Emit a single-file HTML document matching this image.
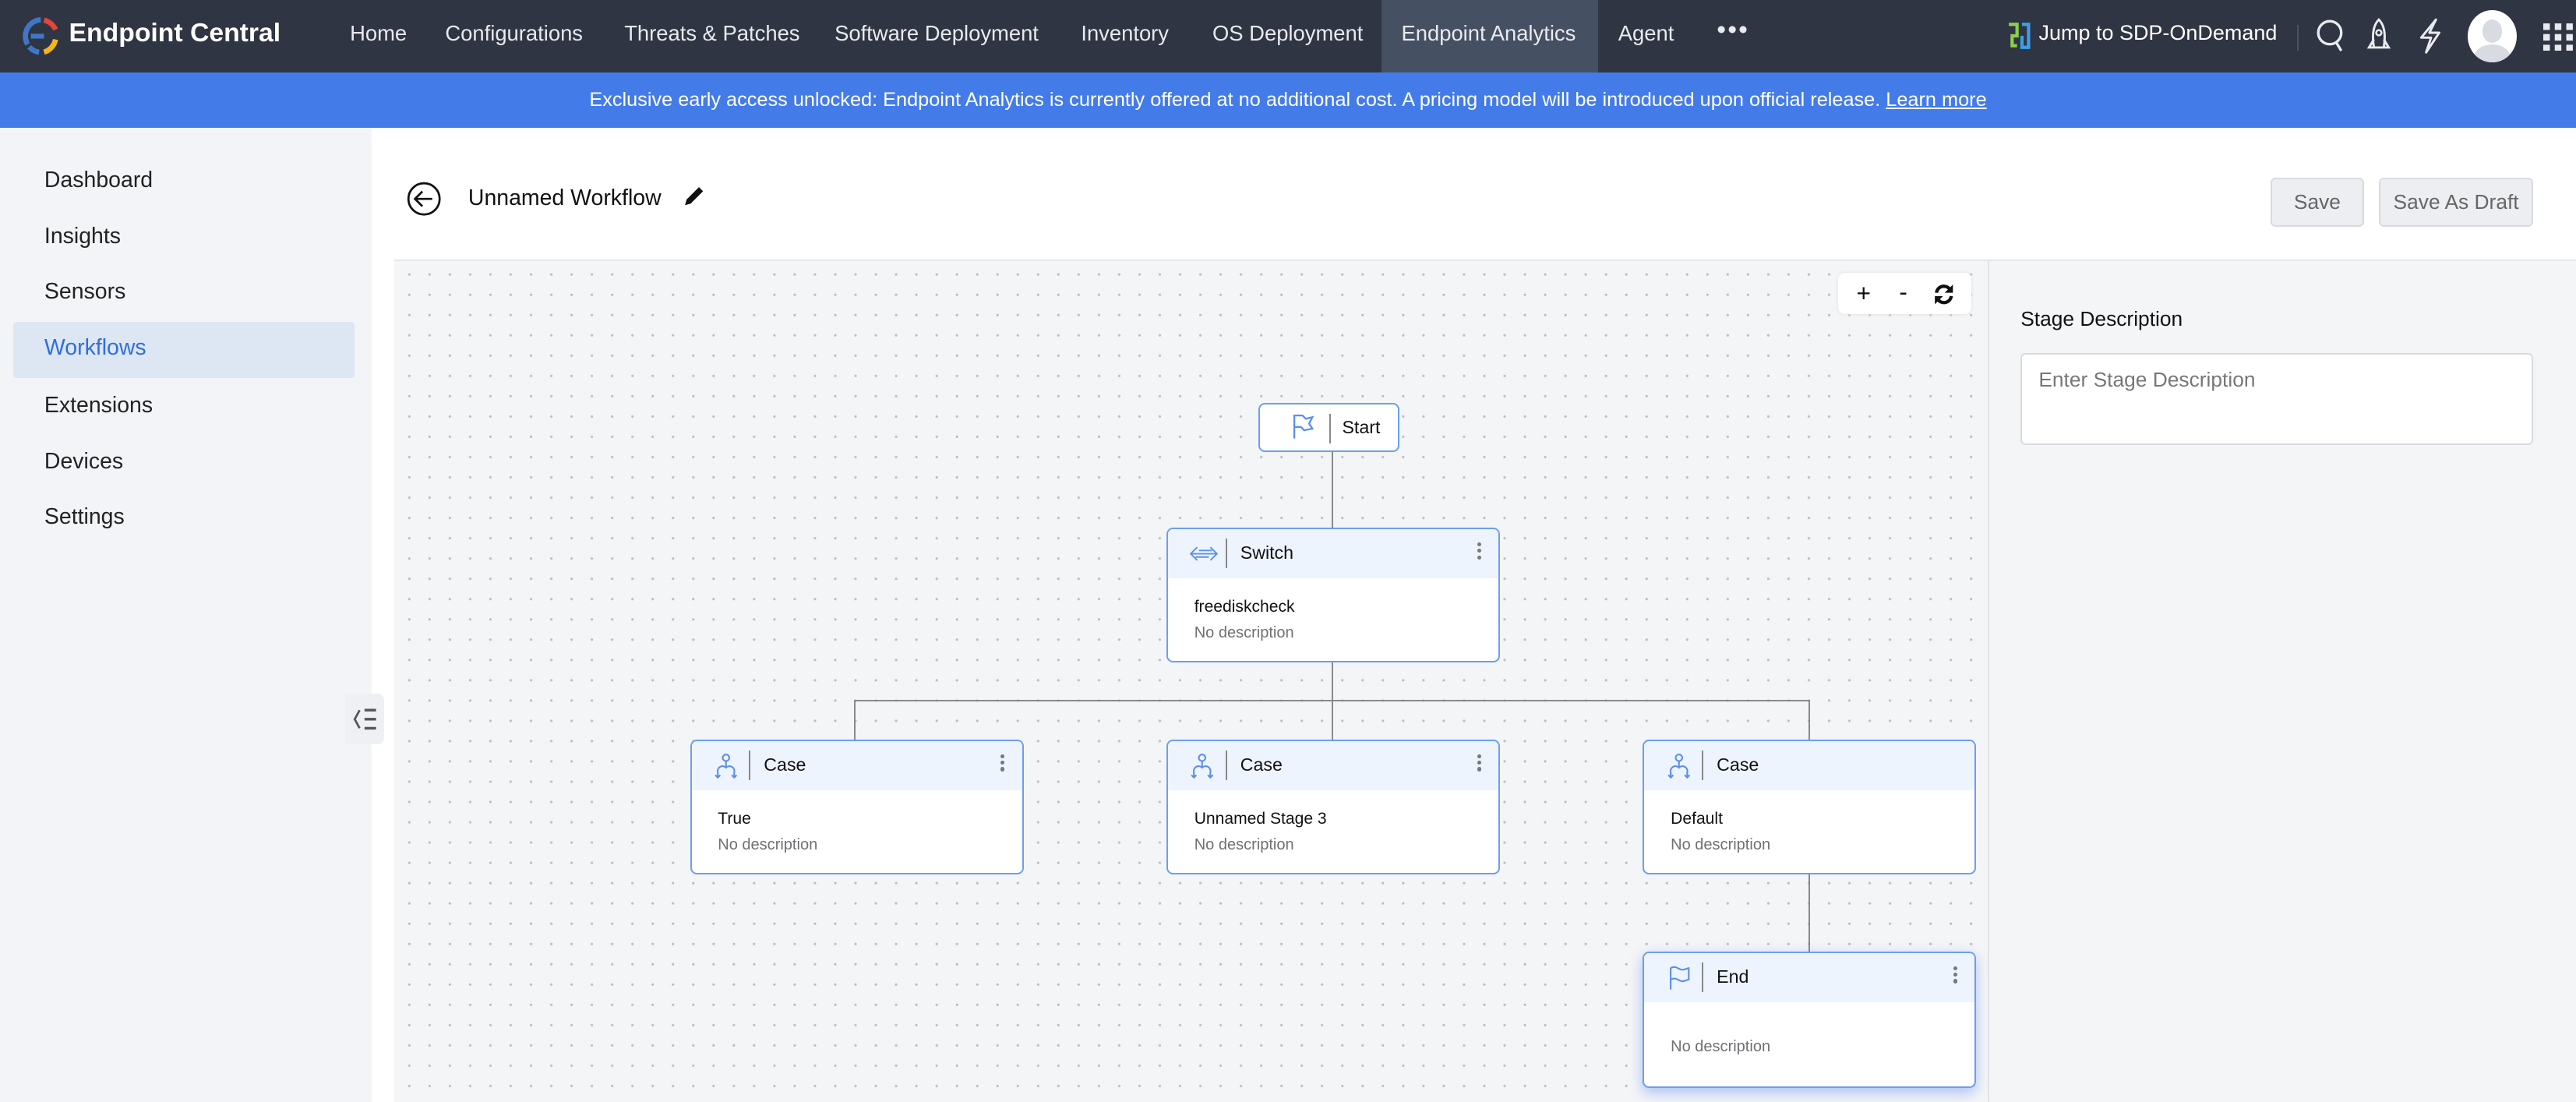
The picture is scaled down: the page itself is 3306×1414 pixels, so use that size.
<!DOCTYPE html>
<html><head><meta charset="utf-8">
<style>
*{box-sizing:border-box;margin:0;padding:0}
html,body{width:3306px;height:1414px;overflow:hidden}
body{background:#fff;font-family:"Liberation Sans",sans-serif;}
#r{zoom:2.10842;width:1568px;height:671px;position:relative;overflow:hidden;background:#fff}
.a{position:absolute}
.nav{left:0;top:0;width:1568px;height:44px;background:#2f3542}
.nav .t{position:absolute;top:13px;color:#e8eaee;font-size:13px;white-space:nowrap}
.banner{left:0;top:44px;width:1568px;height:34px;background:#437be9;color:#fff;font-size:12px;text-align:center;line-height:34px}
.side{left:0;top:78px;width:226px;height:593px;background:#f3f4f7}
.side div{position:absolute;left:27px;font-size:13.5px;color:#222}
.canvas{left:240px;top:158px;width:970px;height:513px;background-color:#f4f5f7;background-image:radial-gradient(circle,#b9bcc3 0.6px,transparent 0.9px);background-size:12.35px 12.35px;background-position:3px 2px;border-top:1px solid #e6e7ea}
.rp{left:1210px;top:158px;width:358px;height:513px;background:#f4f5f7;border-left:1px solid #e3e4e7;border-top:1px solid #e6e7ea}
.node{position:absolute;background:#fff;border:1px solid #6c9ef0;border-radius:4px;overflow:hidden}
.node .h{height:30px;background:#eef4fd;position:relative}
.node .h .lbl{position:absolute;left:44px;top:8px;font-size:11px;color:#111}
.node .h .sep{position:absolute;left:35px;top:6px;width:1px;height:18px;background:#888}
.node .h .dots{position:absolute;right:10px;top:8px;width:3px}
.dots i{display:block;width:2.5px;height:2.5px;border-radius:50%;background:#777;margin-bottom:1.5px}
.node .b1{position:absolute;left:16px;top:42px;font-size:10px;color:#111}
.node .b2{position:absolute;left:16px;top:58px;font-size:9.5px;color:#6f7075}
.ln{position:absolute;background:#8a8a8a}
.btn{position:absolute;top:108px;height:30px;background:#eceef1;border:1px solid #d8dadf;border-radius:3px;color:#666;font-size:12.5px;text-align:center;line-height:28px}
</style></head><body><div id="r">
<div class="a nav">
  <svg class="a" style="left:13px;top:9px" width="24" height="26" viewBox="0 0 24 26">
    <path d="M12 3 A10 10 0 0 0 4 18" stroke="#3f77c6" stroke-width="3.2" fill="none"/>
    <path d="M14 3.3 A10 10 0 0 1 21 9" stroke="#e2463a" stroke-width="3.2" fill="none"/>
    <path d="M21 15 A10 10 0 0 1 14 22.7" stroke="#f4b41a" stroke-width="3.2" fill="none"/>
    <path d="M5 19.5 A10 10 0 0 0 11 22.8" stroke="#3f77c6" stroke-width="3.2" fill="none"/>
    <rect x="6" y="11.5" width="8" height="3" fill="#3f77c6"/>
  </svg>
  <div class="t" style="left:42px;top:11px;font-size:16px;font-weight:bold;color:#fff">Endpoint Central</div>
  <div class="t" style="left:213px">Home</div>
  <div class="t" style="left:271px">Configurations</div>
  <div class="t" style="left:380px">Threats &amp; Patches</div>
  <div class="t" style="left:508px">Software Deployment</div>
  <div class="t" style="left:658px">Inventory</div>
  <div class="t" style="left:738px">OS Deployment</div>
  <div class="a" style="left:841px;top:0;width:132px;height:44px;background:#465063"></div>
  <div class="t" style="left:853px">Endpoint Analytics</div>
  <div class="t" style="left:985px">Agent</div>
  <div class="t" style="left:1045px;top:9px;font-size:16px;letter-spacing:1px">•••</div>
  <svg class="a" style="left:1222px;top:13px" width="15" height="18" viewBox="0 0 15 18"><path d="M1 2h5v7H3v6h3" stroke="#8ad14a" stroke-width="2" fill="none"/><path d="M9 2h4v14H9V9" stroke="#3aa0e8" stroke-width="2" fill="none"/></svg>
  <div class="t" style="left:1241px;color:#fff;font-size:12.8px">Jump to SDP-OnDemand</div>
  <div class="a" style="left:1398px;top:15px;width:1px;height:16px;background:#4a5263"></div>
  <svg class="a" style="left:1409px;top:11px" width="20" height="22" viewBox="0 0 20 22"><circle cx="9" cy="9" r="7" stroke="#e8eaee" stroke-width="1.6" fill="none"/><path d="M13 15l3 5" stroke="#e8eaee" stroke-width="1.6"/></svg>
  <svg class="a" style="left:1439px;top:11px" width="18" height="22" viewBox="0 0 18 22"><path d="M9 1C5 5 5 12 6 18h6c1-6 1-13-3-17z M6 13l-3 5h3 M12 13l3 5h-3" stroke="#e8eaee" stroke-width="1.4" fill="none"/><circle cx="9" cy="9" r="1.6" stroke="#e8eaee" stroke-width="1.2" fill="none"/></svg>
  <svg class="a" style="left:1471px;top:11px" width="16" height="22" viewBox="0 0 16 22"><path d="M12 1L3 12h6l-3 9 8-12H8z" stroke="#e8eaee" stroke-width="1.4" fill="none" stroke-linejoin="round"/></svg>
  <div class="a" style="left:1502px;top:6px;width:30px;height:32px;border-radius:50%;background:#fff;overflow:hidden"><div class="a" style="left:9px;top:6px;width:12px;height:14px;border-radius:50%;background:#d8dbe2"></div><div class="a" style="left:4px;top:21px;width:22px;height:16px;border-radius:50% 50% 0 0;background:#d8dbe2"></div></div>
  <svg class="a" style="left:1548px;top:14px" width="20" height="17" viewBox="0 0 20 17" fill="#e8eaee"><rect x="0" y="0" width="4" height="4"/><rect x="7" y="0" width="4" height="4"/><rect x="14" y="0" width="4" height="4"/><rect x="0" y="6.5" width="4" height="4"/><rect x="7" y="6.5" width="4" height="4"/><rect x="14" y="6.5" width="4" height="4"/><rect x="0" y="13" width="4" height="4"/><rect x="7" y="13" width="4" height="4"/><rect x="14" y="13" width="4" height="4"/></svg>
</div>
<div class="a banner">Exclusive early access unlocked: Endpoint Analytics is currently offered at no additional cost. A pricing model will be introduced upon official release. <u>Learn more</u></div>
<div class="a side">
  <div style="top:24px">Dashboard</div>
  <div style="top:58px">Insights</div>
  <div style="top:92px">Sensors</div>
  <div class="a" style="left:8px;top:118px;width:208px;height:34px;background:#dde6f3;border-radius:2px"></div>
  <div style="top:126px;color:#2e6ee0">Workflows</div>
  <div style="top:161px">Extensions</div>
  <div style="top:195px">Devices</div>
  <div style="top:229px">Settings</div>
</div>
<svg class="a" style="left:247px;top:110px" width="22" height="22" viewBox="0 0 22 22"><circle cx="11" cy="11" r="9.5" stroke="#111" stroke-width="1.3" fill="none"/><path d="M16 11H6M10 6.5L5.5 11l4.5 4.5" stroke="#111" stroke-width="1.3" fill="none"/></svg>
<div class="a" style="left:285px;top:113px;font-size:13.5px;color:#111">Unnamed Workflow</div>
<svg class="a" style="left:416px;top:113px" width="13" height="13" viewBox="0 0 13 13"><path d="M1 12l1-3.5L9.5 1 12 3.5 4.5 11z" fill="#111"/></svg>
<div class="btn" style="left:1382px;width:57px">Save</div>
<div class="btn" style="left:1448px;width:94px">Save As Draft</div>
<div class="a canvas"></div>
<div class="a rp">
  <div class="a" style="left:19px;top:28px;font-size:12.5px;color:#111">Stage Description</div>
  <div class="a" style="left:19px;top:56px;width:312px;height:56px;background:#fff;border:1px solid #d8dadf;border-radius:3px"><div class="a" style="left:10px;top:8px;font-size:12.5px;color:#777">Enter Stage Description</div></div>
</div>
<div class="a" style="left:210px;top:422px;width:24px;height:31px;background:#eff0f3;border-radius:0 4px 4px 0"></div>
<svg class="a" style="left:214px;top:430px" width="18" height="15" viewBox="0 0 18 15"><path d="M5 2L2 7.5 5 13" stroke="#555" stroke-width="1.3" fill="none"/><path d="M8 2h7M8 7.5h7M8 13h7" stroke="#555" stroke-width="1.6"/></svg>
<div class="a" style="left:1119px;top:166px;width:81px;height:25px;background:#fff;border-radius:4px;box-shadow:0 0 2px #ddd"></div>
<div class="a" style="left:1130px;top:170px;font-size:15px;color:#111">+</div>
<div class="a" style="left:1156px;top:169px;font-size:15px;color:#111">-</div>
<svg class="a" style="left:1176px;top:172px" width="14" height="14" viewBox="0 0 14 14"><path d="M2.5 6A4.5 4.5 0 0 1 11 4.5M11.5 8A4.5 4.5 0 0 1 3 9.5" stroke="#111" stroke-width="2" fill="none"/><path d="M12.5 1v5h-5zM1.5 13V8h5z" fill="#111"/></svg>
<div class="ln" style="left:810.5px;top:274px;width:1px;height:47px"></div>
<div class="ln" style="left:810.5px;top:402px;width:1px;height:48px"></div>
<div class="ln" style="left:520px;top:426px;width:582px;height:1px"></div>
<div class="ln" style="left:520px;top:426px;width:1px;height:24px"></div>
<div class="ln" style="left:1101px;top:426px;width:1px;height:24px"></div>
<div class="ln" style="left:1101px;top:531px;width:1px;height:48px"></div>
<div class="node" style="left:766px;top:245px;width:86px;height:30px">
  <svg class="a" style="left:20px;top:6px" width="14" height="16" viewBox="0 0 14 16"><path d="M1 15V1h5l2 2 4-1-2 4 2 3-5 1-2-2H1" stroke="#5c8fec" stroke-width="1.1" fill="none"/></svg>
  <div class="a" style="left:42px;top:6px;width:1px;height:18px;background:#888"></div>
  <div class="a" style="left:50px;top:8px;font-size:11px;color:#111">Start</div>
</div>
<div class="node" style="left:710px;top:321px;width:203px;height:82px">
  <div class="h"><svg class="a" style="left:13px;top:10px" width="18" height="10" viewBox="0 0 18 10"><path d="M5 1L1 5l4 4M1 5h11M13 1l4 4-4 4M17 5H6M6 3h8M4 7h8" stroke="#5c8fec" stroke-width="0.9" fill="none"/></svg><div class="sep"></div><div class="lbl">Switch</div><div class="dots"><i></i><i></i><i></i></div></div>
  <div class="b1">freediskcheck</div><div class="b2">No description</div>
</div>
<div class="node" style="left:420px;top:450px;width:203px;height:82px">
  <div class="h"><svg class="a" style="left:14px;top:7px" width="14" height="17" viewBox="0 0 14 17"><circle cx="7" cy="3" r="2" stroke="#5c8fec" stroke-width="1" fill="none"/><path d="M7 5v4M2 15v-3a3 3 0 0 1 5-3 3 3 0 0 1 5 3v3M0.5 13.5L2 15l1.5-1.5M10.5 13.5L12 15l1.5-1.5" stroke="#5c8fec" stroke-width="1" fill="none"/></svg><div class="sep"></div><div class="lbl">Case</div><div class="dots"><i></i><i></i><i></i></div></div>
  <div class="b1">True</div><div class="b2">No description</div>
</div>
<div class="node" style="left:710px;top:450px;width:203px;height:82px">
  <div class="h"><svg class="a" style="left:14px;top:7px" width="14" height="17" viewBox="0 0 14 17"><circle cx="7" cy="3" r="2" stroke="#5c8fec" stroke-width="1" fill="none"/><path d="M7 5v4M2 15v-3a3 3 0 0 1 5-3 3 3 0 0 1 5 3v3M0.5 13.5L2 15l1.5-1.5M10.5 13.5L12 15l1.5-1.5" stroke="#5c8fec" stroke-width="1" fill="none"/></svg><div class="sep"></div><div class="lbl">Case</div><div class="dots"><i></i><i></i><i></i></div></div>
  <div class="b1">Unnamed Stage 3</div><div class="b2">No description</div>
</div>
<div class="node" style="left:1000px;top:450px;width:203px;height:82px">
  <div class="h"><svg class="a" style="left:14px;top:7px" width="14" height="17" viewBox="0 0 14 17"><circle cx="7" cy="3" r="2" stroke="#5c8fec" stroke-width="1" fill="none"/><path d="M7 5v4M2 15v-3a3 3 0 0 1 5-3 3 3 0 0 1 5 3v3M0.5 13.5L2 15l1.5-1.5M10.5 13.5L12 15l1.5-1.5" stroke="#5c8fec" stroke-width="1" fill="none"/></svg><div class="sep"></div><div class="lbl">Case</div></div>
  <div class="b1">Default</div><div class="b2">No description</div>
</div>
<div class="node" style="left:1000px;top:579px;width:203px;height:83px;box-shadow:0 3px 8px rgba(80,130,240,.45)">
  <div class="h"><svg class="a" style="left:15px;top:7px" width="14" height="16" viewBox="0 0 14 16"><path d="M1 15V2c3-2 5 1 7 1s3-1 4-1v7c-1 0-2 1-4 1S4 7 1 9" stroke="#5c8fec" stroke-width="1" fill="none"/></svg><div class="sep"></div><div class="lbl">End</div><div class="dots"><i></i><i></i><i></i></div></div>
  <div class="b2" style="top:52px">No description</div>
</div>
</div></body></html>
